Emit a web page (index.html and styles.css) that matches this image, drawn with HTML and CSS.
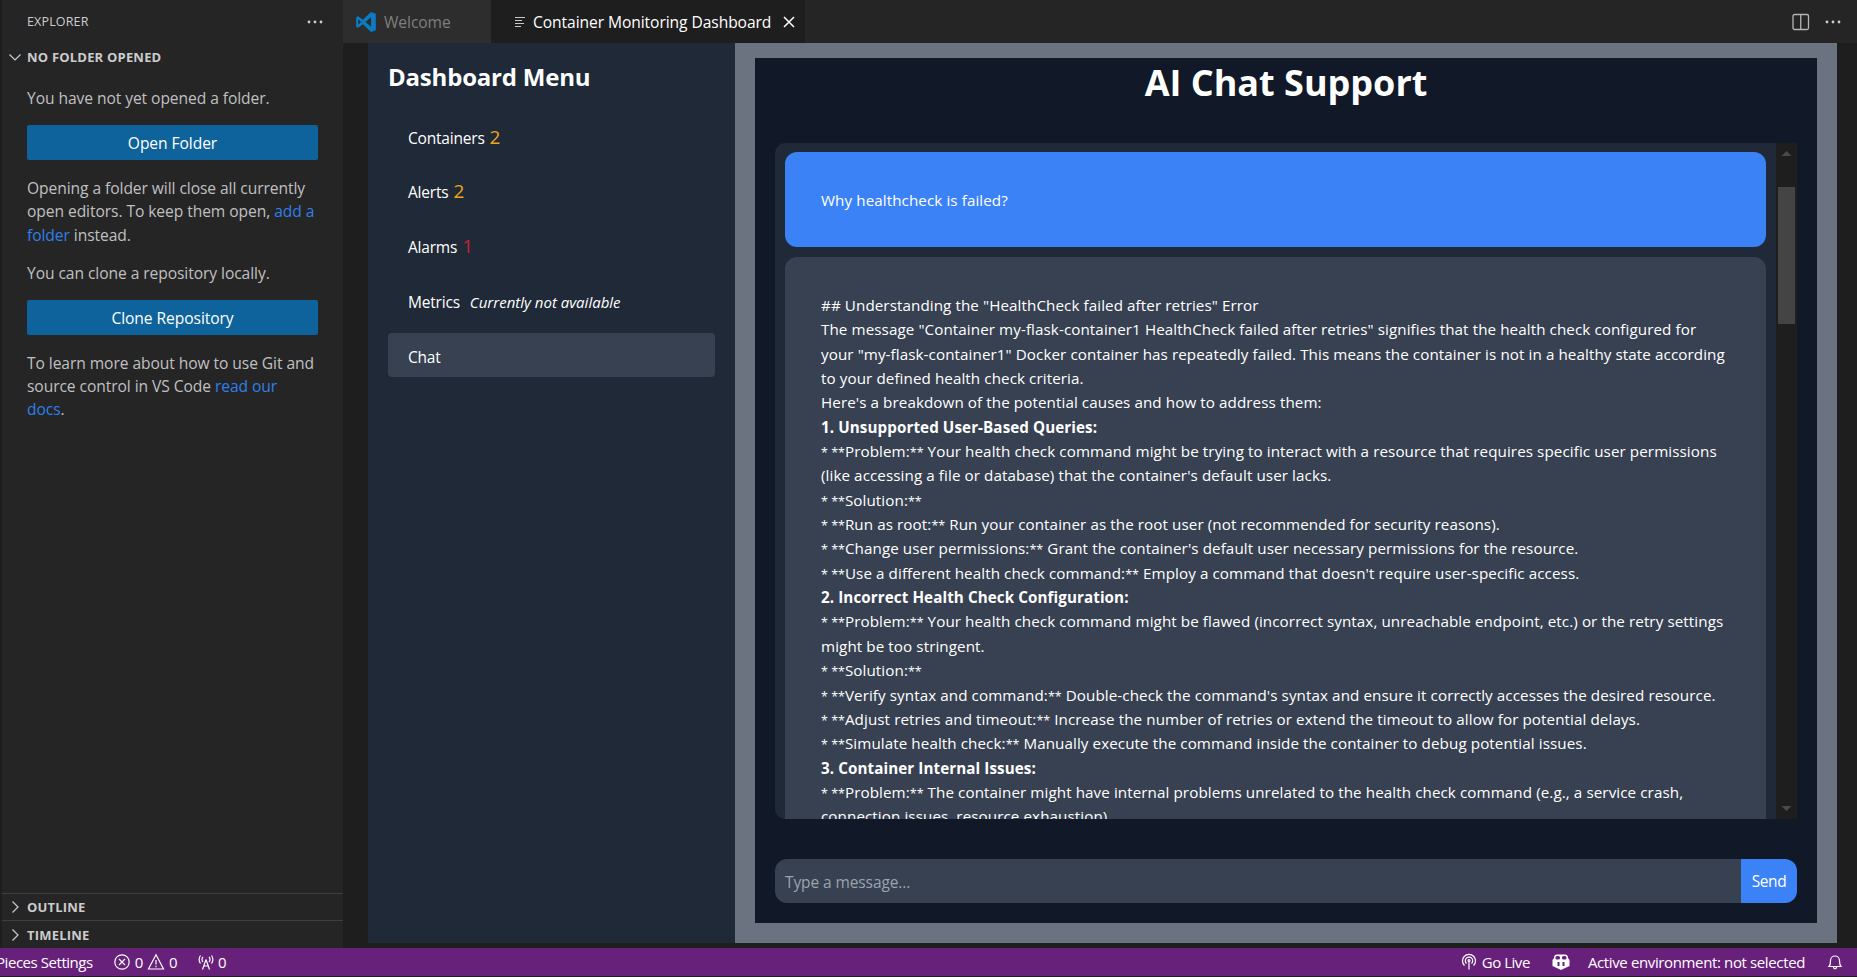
FILE: index.html
```html
<!DOCTYPE html>
<html lang="en">
<head>
<meta charset="utf-8">
<title>Container Monitoring Dashboard</title>
<link rel="stylesheet" href="styles.css">
</head>
<body>
<div class="app">
  <div class="main">
    <aside class="explorer">
      <div class="explorer-head">
        <span class="explorer-title">EXPLORER</span>
        <svg class="dots" width="16" height="4" viewBox="0 0 16 4"><circle cx="2" cy="2" r="1.400"/><circle cx="8" cy="2" r="1.400"/><circle cx="14" cy="2" r="1.400"/></svg>
      </div>
      <div class="section-head first">
        <svg class="chev" width="14" height="14" viewBox="0 0 14 14"><path d="M1.500 4.500 7 10l5.500-5.500"/></svg>
        <span>NO FOLDER OPENED</span>
      </div>
      <div class="explorer-body">
        <p>You have not yet opened a folder.</p>
        <div class="vs-btn">Open Folder</div>
        <p>Opening a folder will close all currently<br>open editors. To keep them open, <a>add a</a><br><a>folder</a> instead.</p>
        <p>You can clone a repository locally.</p>
        <div class="vs-btn">Clone Repository</div>
        <p>To learn more about how to use Git and<br>source control in VS Code <a>read our</a><br><a>docs</a>.</p>
      </div>
      <div class="section-head outline">
        <svg class="chev" width="14" height="14" viewBox="0 0 14 14"><path d="M4.500 1.500 10 7l-5.500 5.500"/></svg>
        <span>OUTLINE</span>
      </div>
      <div class="section-head timeline">
        <svg class="chev" width="14" height="14" viewBox="0 0 14 14"><path d="M4.500 1.500 10 7l-5.500 5.500"/></svg>
        <span>TIMELINE</span>
      </div>
    </aside>
    <section class="editor">
      <div class="tabs">
        <div class="tab tab-welcome">
          <svg width="22" height="22" viewBox="0 0 24 24"><path fill="#0a7cc4" d="M17.500 1 8.600 9.600 3.400 5.600 1.300 6.600v10.800l2.100 1 5.200-4 8.900 8.600 5.200-2.100V3.100zM3.600 15V9l3 3zm13.900 2.300L11.400 12l6.100-5.300z"/></svg>
          <span>Welcome</span>
        </div>
        <div class="tab tab-active">
          <svg width="14" height="14" viewBox="0 0 14 14"><path class="lines" d="M2 2.500h10M2 5.500h7M2 8.500h9M2 11.500h6"/></svg>
          <span>Container Monitoring Dashboard</span>
          <svg class="close" width="14" height="14" viewBox="0 0 14 14"><path d="M2 2l10 10M12 2 2 12"/></svg>
        </div>
        <div class="tab-actions">
          <svg class="split" width="18" height="18" viewBox="0 0 18 18"><rect x="1" y="1.500" width="15.500" height="15" rx="1.500"/><path d="M8.750 1.500v15"/></svg>
          <svg class="dots" width="16" height="4" viewBox="0 0 16 4"><circle cx="2" cy="2" r="1.400"/><circle cx="8" cy="2" r="1.400"/><circle cx="14" cy="2" r="1.400"/></svg>
        </div>
      </div>
      <div class="webview">
        <nav class="menu">
          <h2>Dashboard Menu</h2>
          <ul>
            <li>Containers <b class="amber">2</b></li>
            <li>Alerts <b class="amber">2</b></li>
            <li>Alarms <b class="red">1</b></li>
            <li>Metrics <i>Currently not available</i></li>
            <li class="active">Chat</li>
          </ul>
        </nav>
        <div class="frame">
          <div class="chat">
            <h1>AI Chat Support</h1>
            <div class="log">
              <div class="messages">
                <div class="msg user">Why healthcheck is failed?</div>
                <div class="msg ai">
                  <div>## Understanding the "HealthCheck failed after retries" Error</div>
                  <div>The message "Container my-flask-container1 HealthCheck failed after retries" signifies that the health check configured for<br>your "my-flask-container1" Docker container has repeatedly failed. This means the container is not in a healthy state according<br>to your defined health check criteria.</div>
                  <div>Here's a breakdown of the potential causes and how to address them:</div>
                  <div><strong>1. Unsupported User-Based Queries:</strong></div>
                  <div><span class="md">* **</span>Problem:<span class="md">**</span> Your health check command might be trying to interact with a resource that requires specific user permissions<br>(like accessing a file or database) that the container's default user lacks.</div>
                  <div><span class="md">* **</span>Solution:<span class="md">**</span></div>
                  <div><span class="md">* **</span>Run as root:<span class="md">**</span> Run your container as the root user (not recommended for security reasons).</div>
                  <div><span class="md">* **</span>Change user permissions:<span class="md">**</span> Grant the container's default user necessary permissions for the resource.</div>
                  <div><span class="md">* **</span>Use a different health check command:<span class="md">**</span> Employ a command that doesn't require user-specific access.</div>
                  <div><strong>2. Incorrect Health Check Configuration:</strong></div>
                  <div><span class="md">* **</span>Problem:<span class="md">**</span> Your health check command might be flawed (incorrect syntax, unreachable endpoint, etc.) or the retry settings<br>might be too stringent.</div>
                  <div><span class="md">* **</span>Solution:<span class="md">**</span></div>
                  <div><span class="md">* **</span>Verify syntax and command:<span class="md">**</span> Double-check the command's syntax and ensure it correctly accesses the desired resource.</div>
                  <div><span class="md">* **</span>Adjust retries and timeout:<span class="md">**</span> Increase the number of retries or extend the timeout to allow for potential delays.</div>
                  <div><span class="md">* **</span>Simulate health check:<span class="md">**</span> Manually execute the command inside the container to debug potential issues.</div>
                  <div><strong>3. Container Internal Issues:</strong></div>
                  <div><span class="md">* **</span>Problem:<span class="md">**</span> The container might have internal problems unrelated to the health check command (e.g., a service crash,<br>connection issues, resource exhaustion).</div>
                </div>
              </div>
              <div class="scrollbar">
                <svg width="21" height="21" viewBox="0 0 21 21"><path d="M5.500 13 10.500 8l5 5z"/></svg>
                <div class="thumb-area"><div class="thumb"></div></div>
                <svg width="21" height="21" viewBox="0 0 21 21"><path d="M5.500 8l5 5 5-5z"/></svg>
              </div>
            </div>
            <div class="composer">
              <div class="input">Type a message...</div>
              <div class="send">Send</div>
            </div>
          </div>
        </div>
      </div>
    </section>
  </div>
  <footer class="status">
    <div class="status-group">
      <span class="pieces">Pieces Settings</span>
      <span class="item">
        <svg width="18" height="18" viewBox="0 0 18 18"><circle cx="9" cy="9" r="7.200"/><path d="M6 6l6 6M12 6l-6 6"/></svg>0
        <svg width="18" height="18" viewBox="0 0 18 18"><path d="M9 1.800 1.500 16h15zM9 7v4.500M9 12.700v1.500"/></svg>0
      </span>
      <span class="item tight">
        <svg class="tower" width="18" height="18" viewBox="0 0 18 18"><path d="M9 6.500 5.500 16.500M9 6.500l3.500 10M6.800 13h4.400M3.500 2.500a7 7 0 0 0 0 8M14.500 2.500a7 7 0 0 1 0 8M6 4a3.500 3.500 0 0 0 0 5M12 4a3.500 3.500 0 0 1 0 5"/></svg>0
      </span>
    </div>
    <div class="status-group right">
      <span class="item">
        <svg width="18" height="18" viewBox="0 0 18 18"><path d="M4.500 12.500a6.500 6.500 0 1 1 9 0M6.500 10.500a3.700 3.700 0 1 1 5 0M9 8.500v8"/><circle cx="9" cy="7.500" r="1"/></svg>Go Live
      </span>
      <span class="item">
        <svg class="copilot" width="20" height="18" viewBox="0 0 20 18"><path d="M6 1.500h8c2 0 3 1.200 3 3.500l1.500 2v6L10 17 1.500 13V7L3 5c0-2.300 1-3.500 3-3.500z"/><rect class="cut" x="4.500" y="3" width="4.500" height="3.500" rx="1.500"/><rect class="cut" x="11" y="3" width="4.500" height="3.500" rx="1.500"/><rect class="cut" x="6.500" y="9" width="2" height="4"/><rect class="cut" x="11.500" y="9" width="2" height="4"/></svg>
      </span>
      <span class="item env">Active environment: not selected</span>
      <span class="item">
        <svg width="18" height="18" viewBox="0 0 18 18"><path d="M3 13.500c1.500-1.500 1.500-3 1.500-6a4.500 4.500 0 0 1 9 0c0 3 0 4.500 1.500 6zM7.500 13.500c0 3 3 3 3 0"/></svg>
      </span>
    </div>
  </footer>
</div>
</body>
</html>
```
FILE: styles.css
```css
* { box-sizing: border-box; }
html, body { margin: 0; height: 100%; }
body {
  background: #1e1e1e;
  font-family: "Open Sans", "Noto Sans", "Liberation Sans", sans-serif;
  overflow: hidden;
}
.app { height: 977px; display: flex; flex-direction: column; }
.main { height: 948px; display: flex; }

/* explorer */
.explorer {
  width: 341px;
  flex: none;
  margin-left: 2px;
  background: #252526;
  color: #cccccc;
  display: flex;
  flex-direction: column;
}
.explorer-head {
  height: 43px;
  padding: 0 20px 0 25px;
  display: flex;
  align-items: center;
  justify-content: space-between;
  font-size: 12.500px;
  letter-spacing: 0.15px;
}
.dots circle { fill: #cccccc; }
.section-head {
  display: flex;
  align-items: center;
  gap: 5px;
  padding-left: 6px;
  font-size: 13px;
  font-weight: 700;
  letter-spacing: 0.2px;
  color: #cccccc;
}
.section-head.first { height: 28px; }
.chev { fill: none; stroke: #cccccc; stroke-width: 1.200; }
.explorer-body { padding: 16px 24px 0 25px; font-size: 15.600px; letter-spacing: -0.07px; line-height: 23.200px; }
.explorer-body p { margin: 0 0 15px; color: #c0c0c0; white-space: nowrap; }
.explorer-body a { color: #2f7fea; }
.vs-btn {
  height: 35px;
  width: 291px;
  margin-bottom: 17px;
  padding-top: 2px;
  border-radius: 2px;
  background: #0e639c;
  color: #ffffff;
  display: flex;
  align-items: center;
  justify-content: center;
}
.section-head.outline {
  margin-top: auto;
  height: 27px;
  border-top: 1px solid #3f3f40;
}
.section-head.timeline {
  height: 28px;
  border-top: 1px solid #3f3f40;
}

/* tabs */
.editor { flex: 1; min-width: 0; display: flex; flex-direction: column; }
.tabs {
  height: 43px;
  flex: none;
  display: flex;
  background: #252526;
  font-size: 15.600px;
  letter-spacing: -0.07px;
}
.tab { display: flex; align-items: center; }
.tab-welcome { width: 148px; padding-left: 12px; gap: 7px; background: #2d2d2d; color: #7f7f7f; }
.tab-active { width: 314px; padding-left: 22px; gap: 6px; background: #1e1e1e; color: #ffffff; }
.lines { fill: none; stroke: #c8c8c8; stroke-width: 1.200; }
.close { margin-left: 5px; fill: none; stroke: #ffffff; stroke-width: 1.500; }
.tab-actions { margin-left: auto; padding-right: 16px; display: flex; align-items: center; gap: 15px; }
.split { fill: none; stroke: #b5b5b5; stroke-width: 1.300; }

/* webview */
.webview { flex: 1; min-height: 0; display: flex; padding: 0 20px 5px 25px; color: #ffffff; }
.menu { width: 367px; flex: none; background: #1f2937; padding: 16px 20px 0; }
.menu h2 { margin: 0 0 19px; font-size: 24px; line-height: 36px; font-weight: 700; letter-spacing: -0.2px; }
.menu ul { margin: 0; padding: 0; list-style: none; font-size: 15.500px; letter-spacing: -0.2px; }
.menu li { height: 44px; margin-bottom: 10.800px; padding: 3px 0 0 20px; display: flex; align-items: center; gap: 5px; border-radius: 4px; }
.menu li.active { background: #374151; }
.menu b { font-weight: 400; font-size: 19px; line-height: 20px; margin-top: -2px; }
.menu i { margin-left: 5px; font-size: 15px; letter-spacing: 0; }
.amber { color: #eaa812; }
.red { color: #c8232c; }
.frame { flex: 1; min-width: 0; background: #6b7280; padding: 15px 20px 20px; display: flex; }
.chat { flex: 1; min-width: 0; background: #111827; padding: 0 20px 20px; display: flex; flex-direction: column; }
.chat h1 { margin: 0; height: 85px; text-align: center; font-size: 36px; line-height: 50px; font-weight: 700; letter-spacing: 0; }
.log { height: 676px; flex: none; display: flex; background: #1f2937; border-radius: 10px 0 0 10px; overflow: hidden; }
.messages { flex: 1; min-width: 0; padding: 9px 10px 0; overflow: hidden; font-size: 15.200px; letter-spacing: 0.085px; line-height: 24.350px; }
.msg { border-radius: 12px; padding: 0 36px; }
.msg.user { height: 95px; margin-bottom: 10px; background: #3b82f6; display: flex; align-items: center; padding-top: 1px; }
.msg.ai { background: #374151; padding-top: 36px; padding-bottom: 40px; white-space: nowrap; }
.msg strong { font-weight: 700; }
.md { font-size: 12.500px; line-height: 0; letter-spacing: 0; }
.scrollbar { width: 21px; flex: none; background: #1e1e1e; display: flex; flex-direction: column; }
.scrollbar svg { flex: none; fill: #4a4a4a; }
.thumb-area { flex: 1; padding: 23px 2px 0; }
.thumb { height: 137px; background: #444444; }
.composer { flex: none; margin-top: 40px; height: 44px; display: flex; font-size: 15.500px; }
.input { flex: 1; background: #374151; color: #9ca3af; padding: 2px 0 0 10px; letter-spacing: -0.1px; display: flex; align-items: center; border-radius: 12px 0 0 12px; }
.send { width: 56px; background: #3b82f6; letter-spacing: -0.45px; display: flex; align-items: center; justify-content: center; border-radius: 0 12px 12px 0; }

/* status */
.status {
  height: 28px;
  flex: none;
  background: #68217a;
  color: #ffffff;
  font-size: 15px;
  letter-spacing: -0.45px;
  display: flex;
  justify-content: space-between;
  overflow: hidden;
}
.status-group { display: flex; align-items: center; gap: 20px; }
.status-group.right { gap: 21px; padding-right: 13px; }
.pieces { margin-left: -4px; }
.item { display: flex; align-items: center; gap: 4px; }
.item.tight { gap: 3px; }
.item.env { margin-left: -4px; letter-spacing: -0.37px; }
.item svg { fill: none; stroke: #ffffff; stroke-width: 1.200; }
.item svg.copilot { fill: #ffffff; stroke: none; }
.copilot .cut { fill: #68217a; }
```
